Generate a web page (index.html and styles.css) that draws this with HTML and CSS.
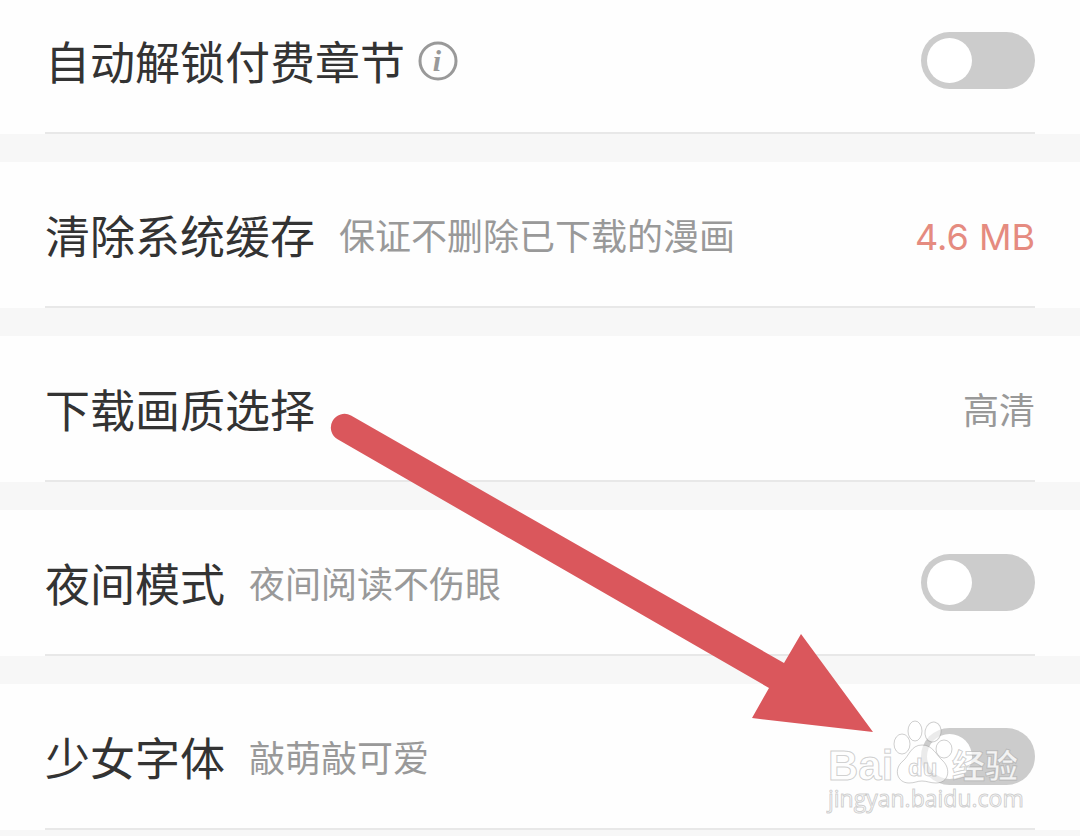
FILE: index.html
```html
<!DOCTYPE html>
<html lang="zh-CN">
<head>
<meta charset="UTF-8">
<meta name="viewport" content="width=device-width, initial-scale=1">
<title>设置</title>
<link rel="stylesheet" href="styles.css">
</head>
<body>
<main class="settings">
	<section class="group">
		<div class="row">
			<label class="title" for="unlock">自动解锁付费章节</label>
			<button class="info" type="button">
				<svg width="40" height="40" viewBox="0 0 40 40">
					<circle cx="20" cy="20" r="18"/>
					<text x="19" y="30" text-anchor="middle">i</text>
				</svg>
			</button>
			<input class="switch" type="checkbox" id="unlock">
		</div>
	</section>
	<section class="group">
		<div class="row">
			<span class="title">清除系统缓存</span>
			<span class="hint">保证不删除已下载的漫画</span>
			<button class="value size" type="button">4.6 MB</button>
		</div>
	</section>
	<section class="group">
		<div class="row">
			<span class="title">下载画质选择</span>
			<button class="value" type="button">高清</button>
		</div>
	</section>
	<section class="group">
		<div class="row">
			<label class="title" for="night">夜间模式</label>
			<span class="hint">夜间阅读不伤眼</span>
			<input class="switch" type="checkbox" id="night">
		</div>
	</section>
	<section class="group">
		<div class="row">
			<label class="title" for="font">少女字体</label>
			<span class="hint">敲萌敲可爱</span>
			<input class="switch" type="checkbox" id="font">
		</div>
	</section>

	<!-- arrow to the font switch -->
	<svg class="arrow" width="546" height="324" viewBox="330 412 546 324">
		<path d="M351 415.500 L784 663 L801 634 L873 732 L752 718 L769 688 L338 439.500 A13.500 13.500 0 0 1 351 415.500 Z"/>
	</svg>

	<!-- watermark -->
	<svg class="mark" width="210" height="100" viewBox="826 718 210 100">
		<text class="latin" x="828" y="780">Bai</text>
		<ellipse cx="902" cy="744" rx="8" ry="10"/>
		<ellipse cx="915" cy="731" rx="7" ry="10"/>
		<ellipse cx="933" cy="732" rx="8" ry="10" transform="rotate(12 933 732)"/>
		<ellipse cx="944" cy="749" rx="8" ry="9"/>
		<path d="M922 745 C911 745 909 756 903 761 C893 769 897 783 909 783 C915 783 917 781 922 781 C927 781 930 783 936 783 C949 783 951 769 943 761 C936 755 933 745 922 745 Z"/>
		<text class="du" x="908" y="776">du</text>
		<text class="cjk" x="952" y="778">经验</text>
		<text class="site" x="828" y="807">jingyan.baidu.com</text>
	</svg>
</main>
</body>
</html>
```
FILE: styles.css
```css
* {
	box-sizing: border-box;
}
body {
	margin: 0;
	background-color: #f7f7f7;
	color: #333;
	font-family: "Noto Sans CJK SC", sans-serif;
}
button {
	padding: 0;
	border: 0;
	background: none;
	font-family: inherit;
	cursor: pointer;
}

.settings {
	position: relative;
	display: flex;
	flex-direction: column;
	gap: 28px;
}
.group {
	padding: 0 45px;
	background-color: #fefefe;
}
.row {
	display: flex;
	align-items: center;
	padding: 44px 0 43px;
	border-bottom: 2px solid #e8e8e8;
}
.group:first-child .row {
	padding-top: 32px;
}
.title {
	font-size: 45px;
	line-height: 57px;
}
.hint {
	margin-left: 24px;
	font-size: 36px;
	line-height: 57px;
	color: #999;
}
.value {
	margin-left: auto;
	font-size: 36px;
	line-height: 57px;
	color: #999;
}
.size {
	padding-top: 6px;
	font-family: Inter, sans-serif;
	line-height: 51px;
	color: #e58b80;
}

.info {
	height: 40px;
	margin-left: 13px;
}
.info svg {
	display: block;
}
.info circle {
	fill: none;
	stroke: #999;
	stroke-width: 3;
}
.info text {
	font: italic bold 30px "Liberation Serif", serif;
	fill: #999;
}

.switch {
	appearance: none;
	width: 114px;
	height: 57px;
	margin: 0 0 0 auto;
	padding: 6px;
	border-radius: 29px;
	background-color: #ccc;
	cursor: pointer;
}
.switch::before {
	content: "";
	display: block;
	width: 45px;
	height: 45px;
	border-radius: 50%;
	background-color: #fff;
}
.switch:checked::before {
	margin-left: auto;
}

.arrow {
	position: absolute;
	top: 412px;
	left: 330px;
	fill: #da575c;
	pointer-events: none;
}
.mark {
	position: absolute;
	top: 718px;
	left: 826px;
	fill: #fff;
	fill-opacity: 0.6;
	stroke: #888;
	stroke-opacity: 0.4;
	stroke-width: 1;
	pointer-events: none;
}
.latin {
	font: bold 42px "Liberation Sans", sans-serif;
}
.du {
	font: bold 24px "Liberation Sans", sans-serif;
}
.cjk {
	font: bold 33px "Noto Sans CJK SC", sans-serif;
	fill-opacity: 0.8;
}
.site {
	font: 23px "Open Sans", sans-serif;
}
```
